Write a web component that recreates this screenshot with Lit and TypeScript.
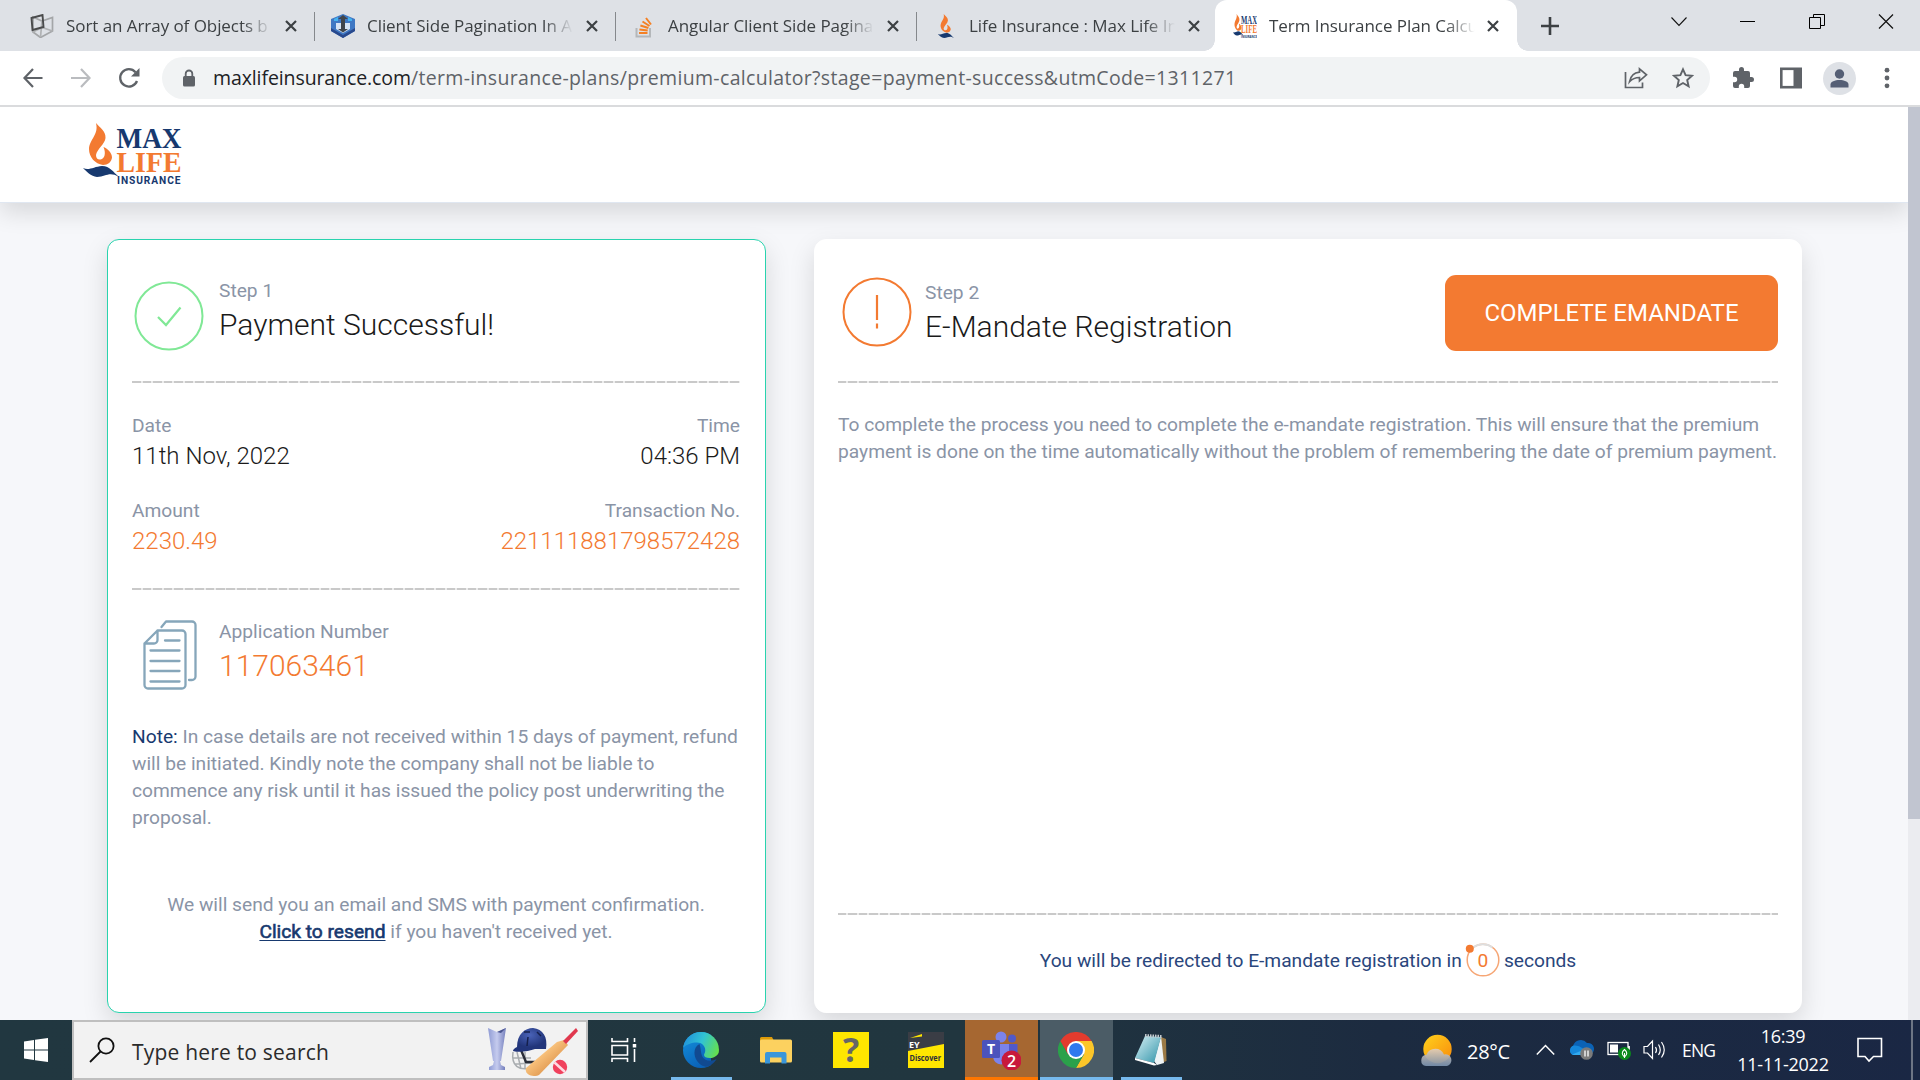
import { LitElement, html, css, svg } from "lit";
import { customElement } from "lit/decorators.js";
import { classMap } from "lit/directives/class-map.js";

/* ---------- shared artwork ---------- */

const flame = svg`
  <path fill="#f37a31" d="M12 0C16 5 22 8 21.500 15C21 21 13 26 12 32C12 35.500 14 37 16.500 36.500C21 35.500 22 30 19.500 24C24 26 28 30 28 34.500C27.500 39 24 42 19 42C11 41 5 34 5 26C5.500 16 15 12 12 0Z"/>
  <path fill="#17396f" d="M-1 45C5 48 10 43.500 18 43C26 43 29 49 35 54C25 48 22 54 13 54C7 53.500 2 48 -1 45Z"/>`;

const logo = html`<svg width="100" height="64" viewBox="0 0 100 64">
  <g transform="translate(1 1)">${flame}</g>
  <g font-family="Liberation Serif, serif" font-weight="700" font-size="30">
    <text x="33.500" y="26" fill="#17396f" textLength="65" lengthAdjust="spacingAndGlyphs">MAX</text>
    <text x="33.500" y="49.500" fill="#f37a31" textLength="65" lengthAdjust="spacingAndGlyphs">LIFE</text>
  </g>
  <text x="34" y="62" fill="#17396f" font-family="Roboto, sans-serif" font-weight="700" font-size="10.200" textLength="63.500">INSURANCE</text>
</svg>`;

const closeIcon = html`<svg width="12" height="12" viewBox="0 0 12 12"><path d="M1 1L11 11M11 1L1 11" stroke="#3c4043" stroke-width="2.200"/></svg>`;

/* ---------- browser tabs ---------- */

const favicons = [
  html`<svg width="24" height="24" viewBox="0 0 24 24" fill="none" stroke-width="1.700">
    <path d="M3 3L12 7L22.500 3.500V17L10.500 23.500L3 18Z" stroke="#a4a6a8"/><path d="M12 7L10.500 23M3 18L12 13.500L22.500 17" stroke="#b0b2b4"/>
    <path d="M1.500 4L12.500 1L13.500 13L2.500 16Z" stroke="#4a4b4c" stroke-width="1.900"/></svg>`,
  html`<svg width="24" height="24" viewBox="0 0 24 24">
    <path d="M12 0L24 5V17L12 24L0 17V5Z" fill="#3f78c4"/><path d="M0 14L12 21L24 14V17L12 24L0 17Z" fill="#29498d"/>
    <path d="M3 5L7 3V7H3ZM17 3L21 5V7H17Z" fill="#45b3ef"/><path d="M5 9H19V15L12 19L5 15Z" fill="#d6e4f5"/>
    <path d="M12 1L17 5H14V15H17L12 18.500L7 15H10V5H7Z" fill="#40454b"/></svg>`,
  html`<svg width="24" height="24" viewBox="0 0 24 24" fill="none">
    <path d="M4.500 14V22.500H18V14" stroke="#b4b7ba" stroke-width="2"/>
    <path d="M7 19H15.500M7.400 15.500L15.700 16.500M8.400 11.500L16.400 14M10.500 7.500L17.500 12M14 4L19 10.500" stroke="#f48024" stroke-width="2"/></svg>`,
  html`<svg width="24" height="24" viewBox="-8 0 46 54">${flame}</svg>`,
  html`<svg width="24" height="24" viewBox="0 0 24 24">
    <g transform="scale(.3 .4)">${flame}</g>
    <g font-family="Liberation Serif, serif" font-weight="700" font-size="12">
      <text x="8" y="9.500" fill="#17396f" textLength="16" lengthAdjust="spacingAndGlyphs">MAX</text>
      <text x="8" y="19" fill="#f37a31" textLength="16" lengthAdjust="spacingAndGlyphs">LIFE</text></g>
    <text x="8" y="24" fill="#17396f" font-family="Open Sans, sans-serif" font-size="3.500" font-weight="700" textLength="16" lengthAdjust="spacingAndGlyphs">INSURANCE</text></svg>`,
];

const tabs = [
  "Sort an Array of Objects b",
  "Client Side Pagination In A",
  "Angular Client Side Pagina",
  "Life Insurance : Max Life In",
  "Term Insurance Plan Calcu",
];

@customElement("browser-tabs")
class BrowserTabs extends LitElement {
  static styles = css`
    :host { display: flex; height: 51px; background: #dee1e6; padding-left: 14px; font: 17px/24px "Open Sans", "Noto Sans", sans-serif; color: #3c4043; }
    .tab { width: 301px; height: 51px; box-sizing: border-box; padding-left: 16px; display: flex; align-items: center; position: relative; flex: none; }
    .tab.ruled::after { content: ""; position: absolute; right: 0; top: 12px; width: 1.5px; height: 29px; background: #85888c; }
    .tab.active { background: #fff; border-radius: 12px 12px 0 0; margin-left: -3px; padding-left: 18px; width: 302px; }
    .tab.active::before, .tab.active::after { content: ""; position: absolute; bottom: 0; width: 11px; height: 11px; }
    .tab.active::before { left: -11px; background: radial-gradient(circle at 0 0, transparent 10.500px, #fff 11px); }
    .tab.active::after { right: -11px; background: radial-gradient(circle at 100% 0, transparent 10.500px, #fff 11px); }
    .icon { width: 24px; height: 24px; margin-right: 12px; display: block; }
    .title { width: 213px; margin-right: 6px; overflow: hidden; white-space: nowrap; letter-spacing: -.06px;
      -webkit-mask-image: linear-gradient(90deg, #000 176px, transparent 206px); mask-image: linear-gradient(90deg, #000 176px, transparent 206px); }
    .active .title { margin-right: 5px; }
    svg { display: block; }
    .plus { margin: 17px 0 0 24px; }
    .window { margin-left: auto; padding: 13px 26px 0 0; display: flex; gap: 53px; height: 18px; }
  `;
  render() {
    return html`
      ${tabs.map((title, i) => html`
        <div class=${classMap({ tab: true, active: i === 4, ruled: i < 3 })}>
          <span class="icon">${favicons[i]}</span><span class="title">${title}</span>${closeIcon}
        </div>`)}
      <svg class="plus" width="18" height="18" viewBox="0 0 18 18"><path d="M9 0V18M0 9H18" stroke="#3c4043" stroke-width="2.600"/></svg>
      <div class="window">
        <svg width="16" height="17" viewBox="0 0 16 17" fill="none" stroke="#111" stroke-width="1.100"><path d="M.5 4.500L8 12.500L15.500 4.500"/></svg>
        <svg width="16" height="17" viewBox="0 0 16 17"><path d="M0 8.500H15" stroke="#000" stroke-width="1"/></svg>
        <svg width="16" height="17" viewBox="0 0 16 17" fill="none" stroke="#000" stroke-width="1"><path d="M.5 4.500H11.500V15.500H.5ZM4.500 4.500V1.500H15.500V12.500H11.500"/></svg>
        <svg width="16" height="17" viewBox="0 0 16 17" fill="none" stroke="#111" stroke-width="1.200"><path d="M1 1.500L15 15.500M15 1.500L1 15.500"/></svg>
      </div>`;
  }
}

/* ---------- address bar ---------- */

@customElement("browser-toolbar")
class BrowserToolbar extends LitElement {
  static styles = css`
    :host { display: flex; align-items: center; box-sizing: border-box; height: 56px; padding: 0 22px 0 22px; background: #fff; border-bottom: 2px solid #dadbdd; }
    svg { display: block; flex: none; }
    .nav { display: flex; gap: 26px; width: 140px; }
    .omnibox { width: 1548px; height: 42px; border-radius: 21px; background: #f1f3f4; display: flex; align-items: center; box-sizing: border-box; padding: 0 16px 0 20px; }
    .url { margin-left: 17px; margin-right: auto; font: 19.500px/28px "Open Sans", "Noto Sans", sans-serif; white-space: nowrap; color: #5f6368; letter-spacing: .335px; }
    .domain { color: #202124; letter-spacing: -.1px; }
    .share { margin-right: 24px; }
    .tools { display: flex; align-items: center; margin-left: 21px; }
    .panel { margin: 0 21px 0 25px; }
    .dots { margin-left: 27px; }
  `;
  render() {
    return html`
      <div class="nav">
        <svg width="22" height="22" viewBox="0 0 22 22" fill="none" stroke="#5f6368" stroke-width="2.200"><path d="M20.500 11H3M11 2L2.500 11L11 20"/></svg>
        <svg width="22" height="22" viewBox="0 0 22 22" fill="none" stroke="#babcbf" stroke-width="2.200"><path d="M1 11H19M11 2L19.500 11L11 20"/></svg>
        <svg width="22" height="22" viewBox="0 0 22 22" fill="none" stroke="#5f6368" stroke-width="2.300"><path d="M19 14A8.700 8.700 0 1 1 17.500 5.200"/><path d="M21.500 1V9.500H13Z" fill="#5f6368" stroke="none"/></svg>
      </div>
      <div class="omnibox">
        <svg width="14" height="18" viewBox="0 0 14 18"><rect x="1" y="7" width="12" height="10.500" rx="1.500" fill="#5f6368"/><path d="M3.700 8V4.800a3.300 3.300 0 0 1 6.600 0V8" fill="none" stroke="#5f6368" stroke-width="1.800"/></svg>
        <span class="url"><span class="domain">maxlifeinsurance.com</span>/term-insurance-plans/premium-calculator?stage=payment-success&amp;utmCode=1311271</span>
        <svg class="share" width="24" height="22" viewBox="0 0 24 22" fill="none" stroke="#5f6368" stroke-width="1.700"><path d="M1.500 5V20.500H18.500V15.500"/><path d="M15.500 1.800L22.500 7.800L15.500 13.800V10.500C11 10.500 8 12 5.500 14.800C6.500 9.500 9.500 5.800 15.500 5.200Z"/></svg>
        <svg width="22" height="22" viewBox="0 0 22 22" fill="none" stroke="#5f6368" stroke-width="1.900"><path d="M11 2.300L13.600 8.200L20 8.800L15.200 13L16.600 19.300L11 16L5.400 19.300L6.800 13L2 8.800L8.400 8.200Z"/></svg>
      </div>
      <div class="tools">
        <svg width="24" height="24" viewBox="0 0 24 24"><path fill="#5f6368" d="M20.500 11H19V7a2 2 0 0 0-2-2h-4V3.500a2.500 2.500 0 0 0-5 0V5H4a2 2 0 0 0-2 2v3.800h1.500a2.700 2.700 0 0 1 0 5.400H2V20a2 2 0 0 0 2 2h3.800v-1.500a2.700 2.700 0 0 1 5.400 0V22H17a2 2 0 0 0 2-2v-4h1.500a2.500 2.500 0 0 0 0-5z"/></svg>
        <svg class="panel" width="22" height="22" viewBox="0 0 22 22"><rect x="1.300" y="1.800" width="19.400" height="18.400" fill="#fff" stroke="#5f6368" stroke-width="2.600"/><rect x="13.500" y="1" width="8" height="20" fill="#5f6368"/></svg>
        <svg width="33" height="33" viewBox="0 0 33 33"><circle cx="16.500" cy="16.500" r="16.500" fill="#dee1e6"/><circle cx="16.500" cy="12" r="4.700" fill="#555f75"/><path d="M7.500 25.500V22.500C7.500 19.500 12 18 16.500 18S25.500 19.500 25.500 22.500V25.500Z" fill="#555f75"/></svg>
        <svg class="dots" width="8" height="22" viewBox="0 0 8 22" fill="#5f6368"><circle cx="4" cy="3.200" r="2.400"/><circle cx="4" cy="11" r="2.400"/><circle cx="4" cy="18.800" r="2.400"/></svg>
      </div>`;
  }
}

/* ---------- page content ---------- */

@customElement("payment-page")
class PaymentPage extends LitElement {
  static styles = css`
    :host { display: flex; height: 913px; overflow: hidden; background: #f6f7fa; font: 19.190px/27px Roboto, sans-serif; color: #8a94a6; }
    svg { display: block; flex: none; }
    .main { width: 1908px; height: 913px; overflow: hidden; }
    .top { height: 95px; border-bottom: 1px solid #e0e7f1; background: #fff; padding-left: 83px; box-shadow: 0 10px 22px rgba(0, 0, 0, .12); }
    .top svg { padding-top: 15px; }
    .track { width: 12px; background: #ebecf0; }
    .thumb { height: 712px; background: #c1c5d0; }
    .cards { display: flex; gap: 48px; padding: 36px 0 0 107px; }
    .card { height: 774px; box-sizing: border-box; background: #fff; border: 1px solid #fff; border-radius: 12px; box-shadow: 0 10px 26px rgba(0, 0, 0, .13); }
    .paid { width: 659px; padding: 0 25px 0 24px; border-color: #29d3ae; }
    .mandate { width: 988px; padding: 0 23px; }
    .head { height: 141px; display: flex; align-items: flex-start; }
    .badge { margin: 41px 15px 0 2px; }
    .mandate .badge { margin: 37px 13px 0 4px; }
    .head .words { padding-top: 37px; }
    .mandate .words { padding-top: 39px; }
    .title { font-size: 30px; font-weight: 300; line-height: 36px; margin-top: 3px; color: #1a1a1a; }
    .rule { height: 2px; background: repeating-linear-gradient(90deg, #c9c9c9 0 8.500px, #ececec 8.500px 10.500px); }
    .facts { display: grid; grid-template-columns: auto auto; justify-content: space-between; row-gap: 26px; margin: 29px 0 32px; }
    .value { font-size: 24px; font-weight: 300; line-height: 30px; margin-top: 2px; color: #1a1a1a; }
    .right { text-align: right; }
    .orange { color: #f37a31; }
    .application { display: flex; height: 72px; margin-top: 28px; }
    .application svg { margin: 2px 22px 0 11px; }
    .note { margin-top: 33px; }
    .navy { color: #17396f; }
    .sent { margin-top: 60px; text-align: center; }
    .link { color: #17396f; text-decoration: underline; text-underline-offset: 2px; -webkit-text-stroke: .6px #17396f; }
    .button { width: 333px; height: 76px; margin: 35px 0 0 auto; border-radius: 11px; background: #f37a31; color: #fff; font-size: 24px; line-height: 76px; text-align: center; }
    .copy { height: 502px; padding-top: 28px; white-space: nowrap; }
    .redirect { display: flex; align-items: center; justify-content: center; padding-top: 28px; color: #2a467c; }
    .counter { width: 36px; height: 34px; margin: 0 3px 0 3px; display: block; }
  `;
  render() {
    return html`
      <div class="main">
        <div class="top">${logo}</div>
        <div class="cards">
          <div class="card paid">
            <div class="head">
              <svg class="badge" width="70" height="70" viewBox="0 0 70 70" fill="none" stroke="#80e896" stroke-width="2"><circle cx="35" cy="35" r="33.500"/><path d="M24 36L32 44L46.500 26.500" stroke-width="2.200"/></svg>
              <div class="words"><div>Step 1</div><div class="title">Payment Successful!</div></div>
            </div>
            <div class="rule"></div>
            <div class="facts">
              <div><div>Date</div><div class="value">11th Nov, 2022</div></div>
              <div class="right"><div>Time</div><div class="value">04:36 PM</div></div>
              <div><div>Amount</div><div class="value orange">2230.49</div></div>
              <div class="right"><div>Transaction No.</div><div class="value orange">221111881798572428</div></div>
            </div>
            <div class="rule"></div>
            <div class="application">
              <svg width="54" height="70" viewBox="0 0 54 70" fill="none" stroke="#86a6ba" stroke-width="2.300" stroke-linecap="round" stroke-linejoin="round">
                <path d="M18.500 7L23 1.500H49A3.500 3.500 0 0 1 52.500 5V56.500A3.500 3.500 0 0 1 49 60H46"/>
                <path d="M14.500 10.500H39A3.500 3.500 0 0 1 42.500 14V65A3.500 3.500 0 0 1 39 68.500H5A3.500 3.500 0 0 1 1.500 65V23.500ZM14.500 10.500V20A3.500 3.500 0 0 1 11 23.500H1.500"/>
                <path d="M22 20.500H36.500M7.500 30.500H36.500M7.500 41H36.500M7.500 51H36.500M7.500 61.500H36.500"/>
              </svg>
              <div><div>Application Number</div><div class="title orange">117063461</div></div>
            </div>
            <div class="note"><span class="navy">Note:</span> In case details are not received within 15 days of payment, refund will be initiated. Kindly note the company shall not be liable to commence any risk until it has issued the policy post underwriting the proposal.</div>
            <div class="sent">We will send you an email and SMS with payment confirmation.<br><span class="link">Click to resend</span> if you haven't received yet.</div>
          </div>
          <div class="card mandate">
            <div class="head">
              <svg class="badge" width="70" height="70" viewBox="0 0 70 70" fill="none" stroke="#f37a31" stroke-width="2"><circle cx="35" cy="35" r="33.500"/><path d="M35 18V43M35 46.500V51.500" stroke-width="2.200"/></svg>
              <div class="words"><div>Step 2</div><div class="title">E-Mandate Registration</div></div>
              <div class="button">COMPLETE EMANDATE</div>
            </div>
            <div class="rule"></div>
            <div class="copy">To complete the process you need to complete the e-mandate registration. This will ensure that the premium<br>payment is done on the time automatically without the problem of remembering the date of premium payment.</div>
            <div class="rule"></div>
            <div class="redirect">
              <span>You will be redirected to E-mandate registration in</span>
              <svg class="counter" viewBox="0 0 36 34"><circle cx="18" cy="17" r="15.800" fill="none" stroke="#f6a675" stroke-width="1.500"/><path d="M6.800 5.800A15.800 15.800 0 0 1 27.500 4.500" fill="none" stroke="#dedede" stroke-width="2"/><circle cx="4.800" cy="5.800" r="4" fill="#f37a31"/><text x="18" y="23.800" text-anchor="middle" font-size="19.190" fill="#f37a31">0</text></svg>
              <span>seconds</span>
            </div>
          </div>
        </div>
      </div>
      <div class="track"><div class="thumb"></div></div>`;
  }
}

/* ---------- desktop taskbar ---------- */

const apps = [
  { cls: "open", art: html`<svg width="38" height="38" viewBox="0 0 38 38">
    <defs>
      <linearGradient id="e1" x1="0" y1=".3" x2="1" y2=".6"><stop offset="0" stop-color="#1f8ddb"/><stop offset=".5" stop-color="#31c3d4"/><stop offset="1" stop-color="#66e04b"/></linearGradient>
      <linearGradient id="e2" x1="0" y1="0" x2=".5" y2="1"><stop offset="0" stop-color="#1595e0"/><stop offset="1" stop-color="#0a62b8"/></linearGradient>
      <clipPath id="ec"><circle cx="19" cy="19" r="18"/></clipPath>
    </defs>
    <g clip-path="url(#ec)">
      <rect width="29" height="38" fill="url(#e2)"/>
      <path d="M0 18C2 7 10 0 19 0C30 0 38 9 38 17C38 23 33 27 28 27C23 27 21 25 22.500 22.500C25 17 21 11.500 15 11.500C9 11.500 3 14 0 18Z" fill="url(#e1)"/>
      <path d="M17.500 13C12 15.500 11 23 14.500 29C18 35 25 38 31 34C35 31 36 28.500 34.500 28C29 31 22 30 20 25C18.500 21 19 17 17.500 13Z" fill="#114a91"/>
    </g></svg>` },
  { cls: "", art: html`<svg width="34" height="34" viewBox="0 0 34 34"><path d="M1 5.500A1.500 1.500 0 0 1 2.500 4H13L15 8H1Z" fill="#dd9a08"/><rect x="1" y="6.500" width="32" height="23" rx="1.500" fill="#fcd15f"/><path d="M6 21A2 2 0 0 1 8 19H25.500A2 2 0 0 1 27.500 21V30.500H22.500V24.500H11V30.500H6Z" fill="#3b96da"/></svg>` },
  { cls: "", art: html`<svg width="36" height="36" viewBox="0 0 36 36"><rect width="36" height="36" fill="#ffe600"/><text x="18" y="30" text-anchor="middle" font-family="Open Sans, sans-serif" font-weight="700" font-size="34" fill="#666">?</text></svg>` },
  { cls: "", art: html`<svg width="36" height="36" viewBox="0 0 36 36"><rect width="36" height="36" fill="#ffe600"/><path d="M0 0H36V12L0 19Z" fill="#3a3d45"/><path d="M2 6L14 2V4.500Z" fill="#ffe600"/><text x="1" y="15.500" font-family="Open Sans, sans-serif" font-weight="700" font-size="9" fill="#fff">EY</text><text x="1.500" y="28.500" font-family="Open Sans, sans-serif" font-weight="700" font-size="8" fill="#2e2e38" textLength="31.500" lengthAdjust="spacingAndGlyphs">Discover</text></svg>` },
  { cls: "alert", art: html`<svg width="40" height="40" viewBox="0 0 40 40"><circle cx="20" cy="7" r="5.500" fill="#7b83eb"/><circle cx="31" cy="8.500" r="4" fill="#5059c9"/><path d="M24 14H36.500V26Q36 33 29 33H24Z" fill="#5059c9"/><path d="M12 14H28V27Q27 34 20 34.500Q13 34 12 27Z" fill="#7b83eb"/><rect x="1" y="10" width="18" height="18" rx="1.500" fill="#4b53bc"/><text x="10" y="24" text-anchor="middle" font-family="Open Sans, sans-serif" font-weight="700" font-size="14" fill="#fff">T</text><circle cx="30.500" cy="30.500" r="10" fill="#c8193c"/><text x="30.500" y="36.500" text-anchor="middle" font-family="Open Sans, sans-serif" font-weight="600" font-size="16" fill="#fff">2</text></svg>` },
  { cls: "focus", art: html`<svg width="36" height="36" viewBox="0 0 36 36"><path d="M33.600 9A18 18 0 0 1 18 36L25.800 22.500L18 9Z" fill="#fcc629"/><path d="M18 36A18 18 0 0 1 2.400 9L10.200 22.500L25.800 22.500Z" fill="#2ba14b"/><path d="M18 9H33.600A18 18 0 0 0 2.400 9L10.200 22.500Z" fill="#e33b2e"/><circle cx="18" cy="18" r="9" fill="#fff"/><circle cx="18" cy="18" r="7" fill="#3079ee"/></svg>` },
  { cls: "open", art: html`<svg width="36" height="36" viewBox="0 0 36 36">
    <defs><linearGradient id="np" x1="0" y1="0" x2="1" y2="1"><stop offset="0" stop-color="#d8f1f6"/><stop offset="1" stop-color="#2f93a8"/></linearGradient></defs>
    <path d="M28 5L33 7L33.500 29L26 32Z" fill="#9b7a46"/><path d="M28 4L31 31L24 33L21 29Z" fill="#eef4f6"/><path d="M12 4L28 5L21 31L2 26Z" fill="url(#np)"/><path d="M2 26L21 31L24 33L21 33.500L2 28Z" fill="#fff"/><path d="M12 3.500L29 4.500" stroke="#c6ccd0" stroke-width="3" stroke-dasharray="1.500 1"/></svg>` },
];

@customElement("desktop-taskbar")
class DesktopTaskbar extends LitElement {
  static styles = css`
    :host { display: flex; height: 60px; background: linear-gradient(90deg, #213740 0%, #21363f 50%, #1c2b40 72%, #1a2744 100%); font-family: "Open Sans", "Noto Sans", sans-serif; color: #fff; }
    svg { display: block; flex: none; }
    .start { width: 72px; display: grid; place-items: center; }
    .search { width: 516px; box-sizing: border-box; border: 2px solid #bfbfbf; background: #f2f2f2; display: flex; align-items: center; padding: 0 7px 0 15px; color: #2b2b2b; font-size: 21px; letter-spacing: .2px; }
    .search .hint { margin: 0 auto 0 17px; padding-top: 3px; white-space: nowrap; }
    .views { width: 76px; display: grid; place-items: center; padding-right: 4px; box-sizing: border-box; }
    .app { width: 73px; height: 60px; margin: 0 1px; display: grid; place-items: center; position: relative; }
    .app svg { margin-right: 2px; }
    .app::after { content: ""; position: absolute; left: 6px; right: 6px; bottom: 0; height: 3px; }
    .open::after { background: #76b9ed; }
    .alert { background: #a66731; }
    .alert::after { left: 0; right: 0; background: #ff7600; }
    .focus { background: #4b5c66; }
    .focus::after { left: 0; right: 0; background: #76b9ed; }
    .tray { margin-left: auto; display: flex; align-items: center; }
    .temp { font-size: 20px; letter-spacing: -.3px; margin: 3px 26px 0 14px; width: 43px; }
    .lang { font-size: 17.500px; letter-spacing: -.8px; margin-left: 14px; width: 35px; }
    .clock { width: 94px; margin-left: 19px; font-size: 18px; line-height: 28px; letter-spacing: -.25px; text-align: center; white-space: nowrap; }
    .bubble { margin: 0 28px 0 27px; }
    .peek { width: 7px; height: 60px; border-left: 2px solid #6d7585; }
  `;
  render() {
    return html`
      <div class="start"><svg width="24" height="24" viewBox="0 0 24 24" fill="#fff"><path d="M0 3.400L10 2V11.500H0ZM11 1.800L24 0V11.500H11ZM0 12.500H10V22L0 20.600ZM11 12.500H24V24L11 22.200Z"/></svg></div>
      <div class="search">
        <svg width="26" height="26" viewBox="0 0 26 26" fill="none" stroke="#111" stroke-width="1.800"><circle cx="17" cy="9" r="7.600"/><path d="M11.500 14.500L1 25"/></svg>
        <span class="hint">Type here to search</span>
        <svg width="92" height="52" viewBox="0 0 92 52">
          <defs>
            <linearGradient id="cup"><stop offset="0" stop-color="#8f9bd4"/><stop offset=".5" stop-color="#c5cbee"/><stop offset="1" stop-color="#7580bd"/></linearGradient>
            <linearGradient id="bat" x1="0" y1="0" x2="1" y2="1"><stop offset=".3" stop-color="#ffcd88"/><stop offset=".8" stop-color="#d98c43"/></linearGradient>
            <radialGradient id="cap" cx=".5" cy=".3"><stop offset="0" stop-color="#4a63b8"/><stop offset="1" stop-color="#22357a"/></radialGradient>
          </defs>
          <path d="M1 4L10 8L19 4L14 37H6Z" fill="url(#cup)"/><path d="M10 8L19 4L14 9Z" fill="#4a5590"/><path d="M7 37H13L14 41L18 43V46H2V43L6 41Z" fill="url(#cup)"/>
          <g fill="none" stroke="#a9adb0" stroke-width="1.500"><path d="M26 28C24 42 32 47 44 44M26 34H44M30 28L34 45M38 28V45M28 40L46 39"/></g>
          <path d="M34 26L39 38H48" fill="none" stroke="#2a2d38" stroke-width="2.400"/>
          <path d="M30 23C30 10 38 4 46 4C56 5 61 13 59 25L48 25C42 27 33 29 26 27C26 25 28 24 30 23Z" fill="url(#cap)"/><path d="M41 13L40 22M37 8H43M50 8L54 12" stroke="#15204c" stroke-width="1.500"/>
          <path d="M77 16L81 21L52 51C46 54 37 50 39 44L70 18Z" fill="url(#bat)"/><path d="M76 17L89 4L91 7L79 20Z" fill="#e0384e"/>
          <circle cx="73" cy="43" r="7.200" fill="#f0415d"/><path d="M67.500 38.500L78 48" stroke="#ffd9e2" stroke-width="2.500"/>
        </svg>
      </div>
      <div class="views"><svg width="27" height="24" viewBox="0 0 27 24" fill="none" stroke="#fff" stroke-width="1.600"><path d="M1 0V3.500H16.500V0M1 24V20.500H16.500V24M1 7.500H16.500V17H1ZM23.500 0V4M23.500 11V24"/><path d="M23.500 6V9.500" stroke-width="3.500"/></svg></div>
      ${apps.map((app) => html`<div class="app ${app.cls}">${app.art}</div>`)}
      <div class="tray">
        <svg width="33" height="33" viewBox="0 0 33 33"><defs><linearGradient id="sun" x1="0" y1="0" x2="1" y2="1"><stop offset="0" stop-color="#ffd21c"/><stop offset="1" stop-color="#f88a0c"/></linearGradient><linearGradient id="haze" x1="0" y1="0" x2="0" y2="1"><stop offset="0" stop-color="#e3cdb8"/><stop offset="1" stop-color="#7890ad"/></linearGradient></defs><circle cx="17.500" cy="15" r="14.200" fill="url(#sun)"/><path d="M6 32A5.700 5.700 0 0 1 6.500 20.700A9.500 9.500 0 0 1 24 20.500A5.800 5.800 0 0 1 27 32Z" fill="url(#haze)" opacity=".93"/></svg>
        <span class="temp">28°C</span>
        <svg width="19" height="12" viewBox="0 0 19 12" fill="none" stroke="#fff" stroke-width="1.500"><path d="M.8 10.500L9.500 1.500L18.200 10.500"/></svg>
        <svg width="52" height="24" viewBox="-14 0 52 24"><path d="M4 17A5 5 0 0 1 4 8A8 8 0 0 1 18 5A6 6 0 0 1 20 17Z" fill="#0b62b5"/><path d="M4 17A5 5 0 0 1 5 7.500C10 7 13 10 19 14L14 17Z" fill="#1587da"/><path d="M3 16.500L14 12L19 17H5Z" fill="#31aaf0"/><circle cx="17.500" cy="15.500" r="6.300" fill="#7b7b7b"/><path d="M16 12.500V18.500M19 12.500V18.500" stroke="#fff" stroke-width="1.300"/></svg>
        <svg width="25" height="24" viewBox="0 0 25 24"><rect x="1" y="4.500" width="20" height="12" fill="none" stroke="#fff" stroke-width="1.300"/><rect x="3" y="6.500" width="8" height="8" fill="#fff"/><path d="M22 8V12" stroke="#fff" stroke-width="1.800"/><circle cx="17.500" cy="15.500" r="6.500" fill="#0a8a1c"/><path d="M17.500 11.500C20.500 14 20.500 16.500 17.500 19C14.500 16.500 14.500 14 17.500 11.500ZM17.500 15V20" fill="none" stroke="#fff" stroke-width="1.100"/></svg>
        <svg width="36" height="24" viewBox="-11 0 36 24" fill="none" stroke="#fff" stroke-width="1.200"><path d="M1 8.500H4.500L9.500 3V20.500L4.500 15H1ZM12.500 9Q14.500 12 12.500 15M15.500 6.500Q19 12 15.500 17M18.500 4Q24 12 18.500 19.500"/></svg>
        <span class="lang">ENG</span>
        <div class="clock">16:39<br>11-11-2022</div>
        <svg class="bubble" width="26" height="26" viewBox="0 0 26 26" fill="none" stroke="#fff" stroke-width="1.600"><path d="M1 1.500H24.500V19.500H16.500L12 24L8 19.500H1Z"/></svg>
        <div class="peek"></div>
      </div>`;
  }
}

@customElement("app-root")
class AppRoot extends LitElement {
  static styles = css`
    :host { display: block; width: 1920px; height: 1080px; overflow: hidden; }
  `;
  render() {
    return html`<browser-tabs></browser-tabs><browser-toolbar></browser-toolbar><payment-page></payment-page><desktop-taskbar></desktop-taskbar>`;
  }
}
